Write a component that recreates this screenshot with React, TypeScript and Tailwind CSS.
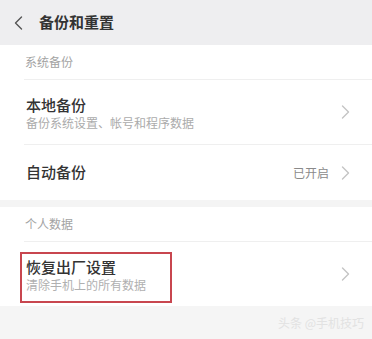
// 备份和重置 — settings screen with the factory-reset row boxed in red.

const FONT = { fontFamily: '"Noto Sans CJK SC", "Noto Sans", sans-serif' };

function Chevron({ left = false, className = "" }: { left?: boolean; className?: string }) {
  return (
    <svg width="9" height="14" viewBox="0 0 9 14" fill="none" className={className}>
      <path
        d={left ? "M7.5 1 L1.5 7 L7.5 13" : "M1.5 1 L7.5 7 L1.5 13"}
        stroke="currentColor"
        strokeWidth="1.4"
        strokeLinecap="round"
        strokeLinejoin="round"
      />
    </svg>
  );
}

function SectionLabel({ text }: { text: string }) {
  return (
    <div className="ml-[24px] flex h-[35px] items-center border-b border-[#efefef] pl-[1px] text-[12px] text-[#a3a3a3]">
      {text}
    </div>
  );
}

export default function App() {
  return (
    <div className="flex h-[339px] w-[372px] flex-col overflow-hidden bg-white" style={FONT}>
      {/* top bar */}
      <div className="flex h-[45px] shrink-0 items-center bg-[#eeeef0] pl-[14px]">
        <Chevron left className="text-[#555]" />
        <span className="ml-[16px] text-[15px] font-bold text-[#333]">备份和重置</span>
      </div>

      <SectionLabel text="系统备份" />

      <div className="ml-[24px] flex h-[65px] items-center border-b border-[#efefef] pr-[22px]">
        <div className="flex flex-1 flex-col pl-[2px] pt-[2px]">
          <span className="text-[15px] leading-[20px] font-medium text-[#333]">本地备份</span>
          <span className="text-[12px] leading-[16px] text-[#ababab]">备份系统设置、帐号和程序数据</span>
        </div>
        <Chevron className="text-[#c4c4c4]" />
      </div>

      <div className="ml-[24px] flex h-[55px] items-center pr-[22px]">
        <span className="flex-1 pl-[2px] text-[15px] font-medium text-[#333]">自动备份</span>
        <span className="mr-[12px] text-[12px] text-[#8a8a8a]">已开启</span>
        <Chevron className="text-[#c4c4c4]" />
      </div>

      <div className="h-[7px] shrink-0 bg-[#f4f4f4]" />

      <SectionLabel text="个人数据" />

      <div className="flex h-[64px] shrink-0 items-start pl-[20px] pr-[22px] pt-[10px]">
        <div className="flex h-[51px] w-[152px] flex-col border-2 border-[#c8464f] pl-[4px] pt-[3px]">
          <span className="text-[15px] leading-[20px] font-medium text-[#333]">恢复出厂设置</span>
          <span className="text-[12px] leading-[16px] text-[#b0b0b0]">清除手机上的所有数据</span>
        </div>
        <div className="flex flex-1 justify-end pt-[15px]">
          <Chevron className="text-[#c4c4c4]" />
        </div>
      </div>

      <div className="flex flex-1 items-end justify-end bg-[#f5f5f5] pb-[7px] pr-[8px]">
        <span className="text-[12px] text-[#e2e2e2]">头条 @手机技巧</span>
      </div>
    </div>
  );
}
